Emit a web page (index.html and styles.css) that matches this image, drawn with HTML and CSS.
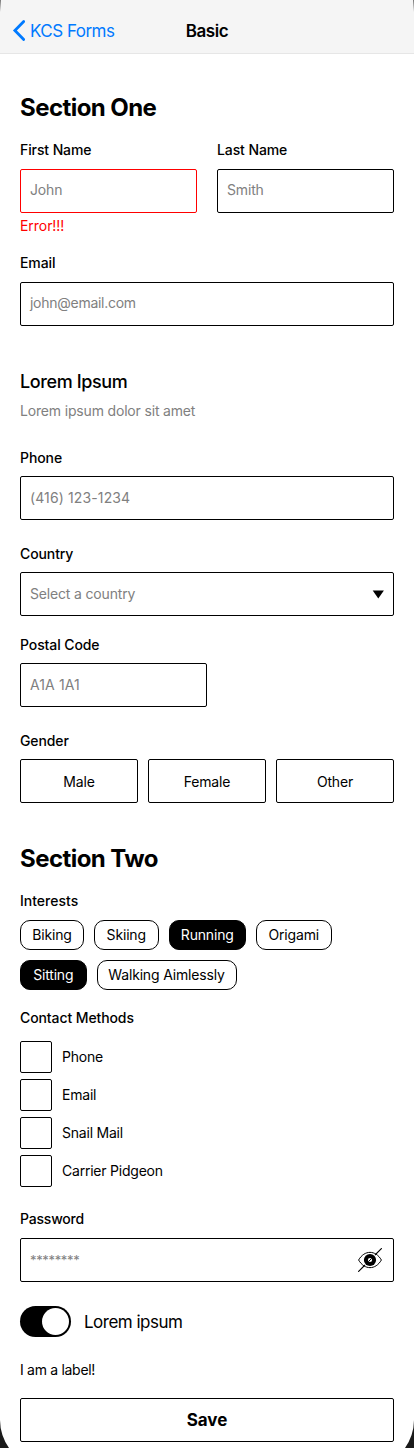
FILE: index.html
```html
<!DOCTYPE html>
<html lang="en">
<head>
<meta charset="utf-8">
<meta name="viewport" content="width=device-width, initial-scale=1">
<title>Basic</title>
<link rel="stylesheet" href="styles.css">
</head>
<body>
<div class="screen">
  <header class="navbar">
    <a class="back"><svg class="chevron" width="13" height="21" viewBox="0 0 13 21"><path d="M11.7 1.5 2.9 10.5 11.7 19.5" fill="none" stroke="#007aff" stroke-width="2.8" stroke-linecap="round" stroke-linejoin="miter"/></svg><span class="back-text">KCS Forms</span></a>
    <h1 class="nav-title">Basic</h1>
  </header>
  <main class="form">
    <h2 class="section-title">Section One</h2>
    <div class="row names">
      <div class="field"><label class="label">First Name</label><div class="input raised invalid"><span class="placeholder">John</span></div><p class="error">Error!!!</p></div>
      <div class="field"><label class="label">Last Name</label><div class="input raised"><span class="placeholder">Smith</span></div></div>
    </div>
    <div class="field email"><label class="label">Email</label><div class="input raised"><span class="placeholder email-text">john@email.com</span></div></div>
    <h3 class="subtitle">Lorem Ipsum</h3>
    <p class="description">Lorem ipsum dolor sit amet</p>
    <div class="field phone"><label class="label">Phone</label><div class="input"><span class="placeholder phone-text">(416) 123-1234</span></div></div>
    <div class="field country"><label class="label">Country</label><div class="input select"><span class="placeholder">Select a country</span><svg width="12" height="9" viewBox="0 0 12 9"><path d="M.7.5h11.2L6.3 8.5Z"/></svg></div></div>
    <div class="field postal"><label class="label">Postal Code</label><div class="input"><span class="placeholder postal-text">A1A 1A1</span></div></div>
    <div class="field gender"><label class="label">Gender</label>
      <div class="options"><div class="option">Male</div><div class="option">Female</div><div class="option">Other</div></div>
    </div>
    <h2 class="section-title second">Section Two</h2>
    <div class="field"><label class="label interests">Interests</label>
      <div class="chips">
        <span class="chip biking">Biking</span><span class="chip skiing">Skiing</span><span class="chip running selected">Running</span><span class="chip origami">Origami</span>
        <span class="chip sitting selected">Sitting</span><span class="chip walking">Walking Aimlessly</span>
      </div>
    </div>
    <div class="field contact"><label class="label">Contact Methods</label>
      <div class="checks">
        <div class="check"><span class="box"></span><span>Phone</span></div>
        <div class="check"><span class="box"></span><span>Email</span></div>
        <div class="check"><span class="box"></span><span>Snail Mail</span></div>
        <div class="check"><span class="box"></span><span>Carrier Pidgeon</span></div>
      </div>
    </div>
    <div class="field password"><label class="label">Password</label>
      <div class="input"><span class="placeholder stars">********</span>
        <svg class="eye" width="24" height="24" viewBox="0 0 24 24"><path d="M.6 12C6.5 1.8 17.5 1.8 23.4 12 17.5 22.2 6.5 22.2.6 12Z" fill="none" stroke="#000" stroke-width="1"/><circle cx="12" cy="12" r="6.1"/><circle cx="12" cy="12" r="2.1" fill="#fff"/><path d="m10.4 13.6 3.2-3.2" stroke="#000" stroke-width="1"/><path d="M.2 23.8 7 17M17 7 23.8.2" stroke="#000" stroke-width="1.1"/></svg>
      </div>
    </div>
    <div class="toggle-row"><span class="toggle"><span class="knob"></span></span><span class="toggle-text">Lorem ipsum</span></div>
    <p class="note">I am a label!</p>
    <div class="save">Save</div>
  </main>
  <svg class="corner left" width="14" height="32" viewBox="0 0 14 32"><path d="M0 4A50 50 0 0 0 9 32H0Z" fill="#1a1a1a"/></svg>
  <svg class="corner right" width="14" height="32" viewBox="0 0 14 32"><path d="M0 4A50 50 0 0 0 9 32H0Z" fill="#1a1a1a"/></svg>
  <span class="edge edge-left"></span>
  <span class="edge edge-right"></span>
</div>
</body>
</html>
```
FILE: styles.css
```css
* { box-sizing: border-box; }
body { margin: 0; background: #fff; color: #000; font-family: Inter, "Liberation Sans", sans-serif; font-size: 14px; line-height: 18px; }
h1, h2, h3, p { margin: 0; }
.screen { position: relative; width: 414px; height: 1448px; overflow: hidden; background: #fff; }
.navbar { display: grid; grid-template-columns: 1fr auto 1fr; align-items: center; height: 54px; padding: 8px 12px 0; background: #f5f5f5; border-bottom: 1px solid #e6e6e6; }
.back { display: flex; align-items: center; gap: 5px; color: #007aff; }
.back-text { font-size: 17px; line-height: 22px; letter-spacing: -.52px; white-space: nowrap; }
.nav-title { font-size: 17px; line-height: 22px; font-weight: 600; letter-spacing: -.42px; }
.form { padding: 39px 20px 0; }
.section-title { font-size: 24px; line-height: 30px; font-weight: 700; letter-spacing: -.56px; margin-bottom: 18px; }
.second { margin-top: 41px; }
.row { display: flex; gap: 20px; }
.names .field { flex: 1; }
.label { display: block; height: 18px; margin-bottom: 10px; font-weight: 500; letter-spacing: -.1px; }
.input { display: flex; align-items: center; justify-content: space-between; height: 44px; padding: 0 9px; border: 1px solid #000; border-radius: 2px; }
.raised { padding-bottom: 2px; }
.invalid { border-color: #f00; }
.placeholder { color: #808080; letter-spacing: -.17px; }
.email-text { letter-spacing: -.27px; }
.phone-text { letter-spacing: .12px; }
.postal-text { letter-spacing: .1px; }
.stars { font-size: 13px; letter-spacing: -.35px; padding-bottom: 1px; }
.error { margin-top: 4px; color: #f00; letter-spacing: -.05px; }
.email { margin-top: 19px; }
.subtitle { margin-top: 44px; font-size: 18px; line-height: 24px; font-weight: 500; letter-spacing: -.38px; }
.description { margin-top: 8px; color: #808080; letter-spacing: -.17px; }
.phone { margin-top: 29px; }
.country { margin-top: 25px; }
.postal { width: 187px; margin-top: 20px; }
.gender { margin-top: 25px; }
.phone .label, .country .label, .postal .label, .gender .label { margin-bottom: 9px; }
.options { display: grid; grid-template-columns: repeat(3, 1fr); gap: 10px; }
.option { display: flex; align-items: center; justify-content: center; height: 44px; padding-top: 1px; border: 1px solid #000; border-radius: 2px; letter-spacing: -.17px; }
.interests { letter-spacing: 0; }
.chips { display: flex; flex-wrap: wrap; gap: 10px; }
.chip { display: flex; align-items: center; justify-content: center; height: 30px; border: 1px solid #000; border-radius: 10px; letter-spacing: -.17px; white-space: nowrap; }
.selected { background: #000; color: #fff; }
.biking { width: 64px; }
.skiing { width: 64.5px; }
.running { width: 77.5px; }
.origami { width: 75.5px; }
.sitting { width: 66.5px; }
.walking { width: 140px; }
.contact { margin-top: 19px; }
.contact .label { margin-bottom: 14px; }
.checks { display: flex; flex-direction: column; gap: 6px; }
.check { display: flex; align-items: center; gap: 10px; height: 32px; letter-spacing: -.22px; }
.box { width: 32px; height: 32px; border: 1px solid #000; border-radius: 2px; }
.password { margin-top: 23px; }
.password .label { letter-spacing: -.2px; }
.eye { margin-right: 2px; }
.toggle-row { display: flex; align-items: center; gap: 13px; height: 31px; margin-top: 24px; }
.toggle { display: flex; justify-content: flex-end; width: 51px; height: 31px; padding: 2px; border-radius: 16px; background: #000; }
.knob { width: 27px; height: 27px; border-radius: 50%; background: #fff; }
.toggle-text { font-size: 17px; line-height: 22px; letter-spacing: -.5px; }
.note { margin-top: 24px; letter-spacing: -.3px; }
.save { display: flex; align-items: center; justify-content: center; height: 44px; margin-top: 19px; border: 1px solid #000; border-radius: 2px; font-size: 17px; font-weight: 700; letter-spacing: -.05px; }
.corner { position: absolute; bottom: 0; }
.left { left: 0; }
.right { right: 0; transform: scaleX(-1); }
.edge { position: absolute; top: 0; width: 1px; height: 12px; background: linear-gradient(#777, #f5f5f5); }
.edge-left { left: 0; }
.edge-right { right: 0; }
```
